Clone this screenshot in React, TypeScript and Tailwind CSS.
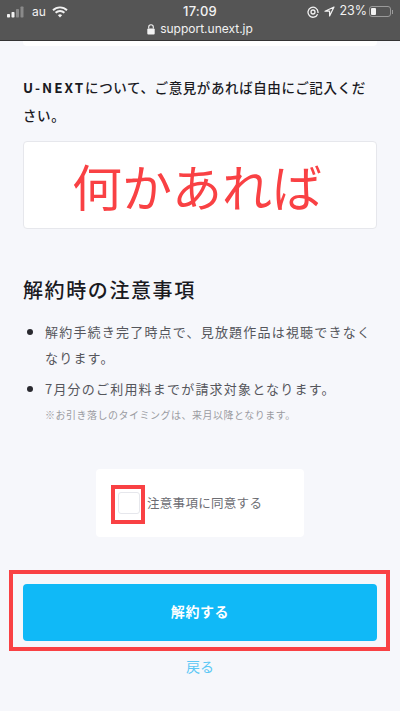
import React from 'react';

const JP = "font-['Noto_Sans_CJK_JP','Inter',sans-serif]";

const StatusBar: React.FC = () => (
  <div className="h-[41px] bg-[#555555] border-b border-[#333333] text-[#f2f2f2] font-['Inter',sans-serif] shrink-0">
    <div className="h-[22px] pt-[1px] flex items-center justify-between pl-[7px] pr-[7px] relative">
      <div className="flex items-center">
        {/* signal */}
        <svg width="18" height="12" viewBox="0 0 18 12" fill="#f2f2f2">
          <rect x="0" y="8" width="3" height="3.5" rx="0.7" />
          <rect x="4.5" y="6" width="3" height="5.5" rx="0.7" />
          <rect x="9" y="3" width="3" height="8.5" rx="0.7" fill="#8a8a8a" />
          <rect x="13.5" y="0.5" width="3" height="11" rx="0.7" fill="#8a8a8a" />
        </svg>
        <span className="ml-[7px] text-[12px] leading-none">au</span>
        {/* wifi */}
        <svg className="ml-[6px]" width="16" height="12" viewBox="0 0 16 12" fill="none" stroke="#f2f2f2" strokeWidth="1.9">
          <path d="M1 4.2a10 10 0 0 1 14 0" />
          <path d="M3.6 6.8a6.3 6.3 0 0 1 8.8 0" />
          <path d="M8 11.6 5.9 9.2a3 3 0 0 1 4.2 0z" fill="#f2f2f2" stroke="none" />
        </svg>
      </div>
      <span className="absolute left-0 right-0 text-center text-[13px] font-medium tracking-[0.2px]">17:09</span>
      <div className="flex items-center">
        <svg width="12" height="12" viewBox="0 0 12 12" fill="none" stroke="#f2f2f2" strokeWidth="1.3">
          <path d="M10.6 8.2A5 5 0 1 1 11 6v1" />
          <circle cx="6" cy="6" r="2" />
        </svg>
        <svg className="ml-[5px]" width="11" height="11" viewBox="0 0 11 11" fill="none" stroke="#f2f2f2" strokeWidth="1.2" strokeLinejoin="round">
          <path d="M10 1 1 5.2h4.6V10z" />
        </svg>
        <span className="ml-[4px] text-[12.5px] leading-none">23%</span>
        <div className="ml-[2px] w-[22px] h-[11px] rounded-[3px] border border-[#9a9a9a] p-[1px] flex">
          <div className="w-[5px] bg-[#f2f2f2] rounded-[1px]" />
        </div>
        <div className="w-[1px] h-[4px] bg-[#9a9a9a] ml-[1px]" />
      </div>
    </div>
    <div className="h-[14px] flex items-center justify-center gap-[5px]">
      <svg width="8" height="11" viewBox="0 0 8 11" fill="#f2f2f2">
        <path d="M1.7 4.5V3a2.3 2.3 0 0 1 4.6 0v1.5" fill="none" stroke="#f2f2f2" strokeWidth="1.1" />
        <rect x="0.3" y="4.5" width="7.4" height="6" rx="1" />
      </svg>
      <span className="text-[12px] leading-none">support.unext.jp</span>
    </div>
  </div>
);

const App: React.FC = () => {
  return (
    <div className={`w-[400px] h-[711px] overflow-hidden bg-[#f6f7fb] flex flex-col ${JP}`}>
      <StatusBar />

      <div className="px-[23px] flex flex-col">
        {/* card scrolled off the top */}
        <div className="h-[5px] bg-white rounded-b-[4px]" />

        <p className="mt-[27px] text-[13.5px] leading-[28px] font-medium tracking-[0.6px] text-[#1a1a1f]">
          <span className="font-bold tracking-[2px]">U-NEXT</span>について、ご意見があれば自由にご記入くだ
          <br />
          さい。
        </p>

        <div className="mt-[12px] h-[88px] bg-white border border-[#e6e7ec] rounded-[4px] flex items-center pl-[48px]">
          <span className="text-[50px] leading-none text-[#f94144] whitespace-nowrap">何かあれば</span>
        </div>

        <h2 className="mt-[46px] text-[20px] leading-[30px] font-medium tracking-[1.6px] text-[#1a1a1f]">
          解約時の注意事項
        </h2>

        <ul className="mt-[14px] text-[13px] tracking-[1.2px] text-[#55565c]">
          <li className="flex">
            <span className="mt-[10px] ml-[4px] mr-[12px] w-[6px] h-[6px] rounded-full bg-[#2a2a30] shrink-0" />
            <span className="leading-[26px]">解約手続き完了時点で、見放題作品は視聴できなくなります。</span>
          </li>
          <li className="flex mt-[5px]">
            <span className="mt-[10px] ml-[4px] mr-[12px] w-[6px] h-[6px] rounded-full bg-[#2a2a30] shrink-0" />
            <div>
              <span className="block leading-[26px]">7月分のご利用料までが請求対象となります。</span>
              <span className="block mt-[3px] text-[10px] leading-[20px] tracking-[0.5px] text-[#9a9ba1]">
                ※お引き落しのタイミングは、来月以降となります。
              </span>
            </div>
          </li>
        </ul>

        <div className="mt-[44px] mx-auto w-[208px] h-[68px] bg-white rounded-[4px] flex items-center pl-[22px]">
          <div className="relative">
            <div className="w-[22px] h-[22px] bg-white border border-[#e6e7ec] rounded-[3px]" />
            <div className="absolute left-[-7px] top-[-7px] w-[34px] h-[39px] border-[4px] border-[#f94144]" />
          </div>
          <span className="ml-[7px] text-[12.5px] tracking-[0.3px] text-[#6c6d73] whitespace-nowrap">注意事項に同意する</span>
        </div>

        <div className="relative mt-[47px]">
          <button className="w-full h-[57px] pb-[2px] bg-[#10b9f7] rounded-[4px] text-white text-[14px] font-bold tracking-[0.6px]">
            解約する
          </button>
          <div className="absolute left-[-14px] top-[-14px] w-[381px] h-[81px] border-[4px] border-[#f94144]" />
        </div>

        <a className="mt-[15px] text-center text-[14px] leading-[20px] text-[#5cc8f5]">戻る</a>
      </div>
    </div>
  );
};

export default App;
